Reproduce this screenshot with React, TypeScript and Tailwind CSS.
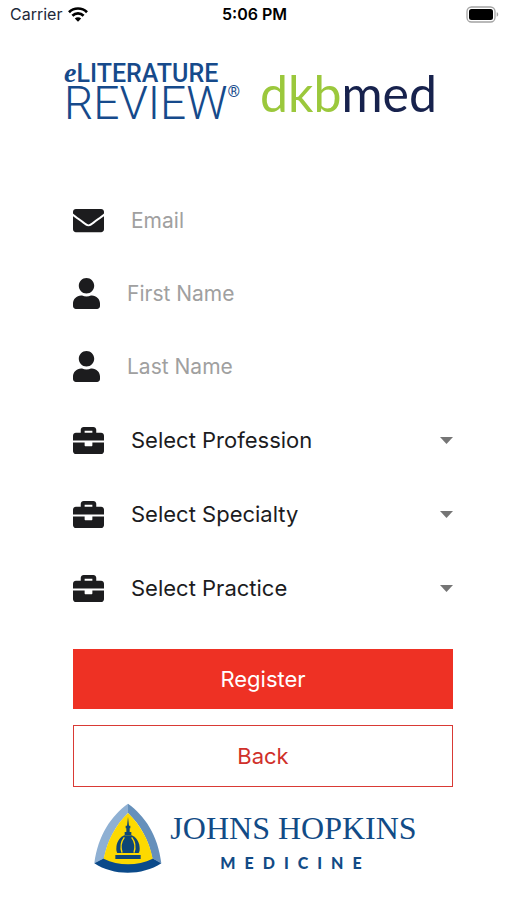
import React from 'react'
import { FaBriefcase, FaEnvelope, FaUser } from 'react-icons/fa'

const StatusBar = () => (
  <div className="grid grid-cols-3 items-center h-7 pl-[10px] pr-2 font-['Inter',sans-serif] text-black">
    <div className="flex items-center gap-[6px]">
      <span className="text-base text-gray-800">Carrier</span>
      <svg viewBox="0 0 20 15" className="w-5 h-[15px]" fill="none" stroke="black" strokeWidth="2.7">
        <path d="M1 5.2a12.8 12.8 0 0 1 18 0" />
        <path d="M4.4 8.7a8 8 0 0 1 11.2 0" />
        <path d="M10 14.8l-3.2-3.2a4.5 4.5 0 0 1 6.4 0z" fill="black" stroke="none" />
      </svg>
    </div>
    <span className="text-base font-semibold text-center">5:06 PM</span>
    <svg viewBox="0 0 33 17" className="w-[33px] h-[17px] justify-self-end">
      <rect x="1" y="1" width="28" height="15" rx="4.5" fill="white" stroke="#a3a3a3" strokeWidth="1.3" />
      <rect x="3" y="3" width="24" height="11" rx="2.5" fill="black" />
      <path d="M30.7 6.3c2 .6 2 3.8 0 4.4z" fill="#a3a3a3" />
    </svg>
  </div>
)

const Logos = () => (
  <header className="flex items-start justify-between h-24 pl-16 pr-[70px] pt-[35px]">
    <div className="text-[#164a8b] font-['Roboto',sans-serif]">
      <div className="text-[25px] leading-5 font-medium">
        <span className="font-['Liberation_Serif',serif] font-bold italic text-[28px] leading-5">e</span>
        LITERATURE
      </div>
      <div className="flex items-start">
        <span className="text-[46px] leading-[38px] font-light">REVIEW</span>
        <span className="text-base leading-4">®</span>
      </div>
    </div>
    <div className="font-['Lato',sans-serif] text-[50px] leading-[60px] text-[#17224d]">
      <span className="text-[#9bc83c]">dkb</span>med
    </div>
  </header>
)

const fields = [
  { id: 'email', label: 'Email', type: 'email', icon: FaEnvelope, size: 'w-[31px] h-[31px]' },
  { id: 'first-name', label: 'First Name', type: 'text', icon: FaUser, size: 'w-[27px] h-[31px]' },
  { id: 'last-name', label: 'Last Name', type: 'text', icon: FaUser, size: 'w-[27px] h-[31px]' },
]

const selects = [
  { id: 'profession', label: 'Select Profession' },
  { id: 'specialty', label: 'Select Specialty' },
  { id: 'practice', label: 'Select Practice' },
]

const RegisterForm = () => (
  <form className="flex flex-col pl-[73px] pr-[54px] pt-[60px] text-[#1c1c1e]" onSubmit={(e) => e.preventDefault()}>
    {fields.map(({ id, label, type, icon: Icon, size }) => (
      <div key={id} className="flex items-center gap-[27px] h-[73px]">
        <label htmlFor={id} aria-label={label}>
          <Icon className={size} preserveAspectRatio="none" />
        </label>
        <input
          id={id}
          type={type}
          placeholder={label}
          className="flex-1 min-w-0 text-[21px] outline-none placeholder:text-[#a0a0a0]"
        />
      </div>
    ))}

    {selects.map(({ id, label }) => (
      <div key={id} className="flex items-center gap-[27px] h-[74px]">
        <label htmlFor={id} aria-label={label}>
          <FaBriefcase className="w-[31px] h-[31px]" />
        </label>
        <div className="flex flex-1 items-center">
          <select id={id} className="flex-1 min-w-0 appearance-none bg-transparent text-[22px] outline-none">
            <option>{label}</option>
          </select>
          <svg viewBox="0 0 13 7" className="w-[13px] h-[7px] pointer-events-none">
            <path d="M0 0h13L6.5 7z" fill="#757575" />
          </svg>
        </div>
      </div>
    ))}

    <button type="submit" className="mt-6 h-[60px] bg-[#ee3124] text-[22px] text-white">
      Register
    </button>
    <button type="button" className="mt-4 h-[62px] border border-[#d93a35] text-[22px] text-[#d0302a]">
      Back
    </button>
  </form>
)

const Shield = () => (
  <svg viewBox="26 24 204 210" className="w-[68px] h-[70px] shrink-0">
    <path d="M128 26C78 62 38 120 27 205L56 190C66 136 92 90 128 54z" fill="#8fb0d3" />
    <path d="M128 26c50 36 90 94 100 179l-27-15C191 136 165 90 128 54z" fill="#6690bb" />
    <path d="M27 205l29-15c46 20 100 20 145 0l27 15c-58 38-144 38-201 0z" fill="#0b4a8a" />
    <path d="M128 54c37 36 63 82 74 137-46 22-102 22-147 0C66 136 91 90 128 54z" fill="#fdd900" />
    <g fill="#0e4676">
      <path d="M128 66l3 26h4v8h-2v11h5v9h-20v-9h5v-11h-2v-8h4z" />
      <path d="M117 121h22c16 8 24 22 24 40 0 6-1 10-3 13H96c-2-3-3-7-3-13 0-18 8-32 24-40z" />
      <rect x="90" y="180" width="76" height="12" />
    </g>
    <path
      d="M117 127c-10 13-12 30-7 46M139 127c10 13 12 30 7 46"
      fill="none"
      stroke="#fdd900"
      strokeWidth="4"
    />
  </svg>
)

const HopkinsLogo = () => (
  <footer className="flex items-start justify-center gap-2 pt-4 pl-1">
    <Shield />
    <div className="text-[#124b86]">
      <div className="font-['Liberation_Serif',serif] text-[32px] leading-[50px]">JOHNS HOPKINS</div>
      <div className="pl-1 font-['Lato',sans-serif] font-black text-base leading-5 tracking-[9px] text-center">
        MEDICINE
      </div>
    </div>
  </footer>
)

const App = () => {
  return (
    <main className="min-h-screen bg-white font-['Inter',sans-serif]">
      <StatusBar />
      <Logos />
      <RegisterForm />
      <HopkinsLogo />
    </main>
  )
}

export default App
